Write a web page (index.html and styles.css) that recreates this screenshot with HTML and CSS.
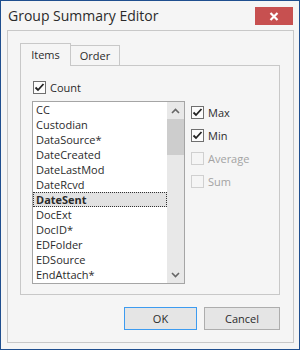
FILE: index.html
```html
<!DOCTYPE html>
<html lang="en">
  <head>
    <meta charset="UTF-8">
    <meta name="viewport" content="width=device-width, initial-scale=1.0">
    <title>Group Summary Editor</title>
    <link rel="stylesheet" href="styles.css">
  </head>
  <body>
    <div class="window">
      <div class="titlebar">
        <span class="title">Group Summary Editor</span>
        <button class="close" aria-label="Close">
          <svg width="10" height="9" viewBox="0 0 10 9">
            <path d="M1.5 1 L8.5 8 M8.5 1 L1.5 8" stroke="#fff" stroke-width="2.2" fill="none"/>
          </svg>
        </button>
      </div>

      <div class="group">
        <div class="tabs">
          <div class="tab active">Items</div>
          <div class="tab">Order</div>
        </div>

        <div class="page">
          <label class="check">
            <span class="box"><svg width="11" height="11" viewBox="0 0 11 11"><path d="M1.5 5.5 L4 8 L9.5 2" stroke="#222" stroke-width="1.8" fill="none"/></svg></span>
            Count
          </label>

          <div class="body">
            <div class="list">
              <div class="items">
                <div class="row">CC</div>
                <div class="row">Custodian</div>
                <div class="row">DataSource*</div>
                <div class="row">DateCreated</div>
                <div class="row">DateLastMod</div>
                <div class="row">DateRcvd</div>
                <div class="row selected">DateSent</div>
                <div class="row">DocExt</div>
                <div class="row">DocID*</div>
                <div class="row">EDFolder</div>
                <div class="row">EDSource</div>
                <div class="row">EndAttach*</div>
              </div>
              <div class="scrollbar">
                <span class="arrow"><svg width="9" height="6" viewBox="0 0 9 6"><path d="M1 5 L4.5 1.5 L8 5" stroke="#666" stroke-width="1.6" fill="none"/></svg></span>
                <span class="track"><span class="thumb"></span></span>
                <span class="arrow"><svg width="9" height="6" viewBox="0 0 9 6"><path d="M1 1 L4.5 4.5 L8 1" stroke="#666" stroke-width="1.6" fill="none"/></svg></span>
              </div>
            </div>

            <div class="options">
              <label class="check">
                <span class="box"><svg width="11" height="11" viewBox="0 0 11 11"><path d="M1.5 5.5 L4 8 L9.5 2" stroke="#222" stroke-width="1.8" fill="none"/></svg></span>
                Max
              </label>
              <label class="check">
                <span class="box"><svg width="11" height="11" viewBox="0 0 11 11"><path d="M1.5 5.5 L4 8 L9.5 2" stroke="#222" stroke-width="1.8" fill="none"/></svg></span>
                Min
              </label>
              <label class="check disabled">
                <span class="box"></span>
                Average
              </label>
              <label class="check disabled">
                <span class="box"></span>
                Sum
              </label>
            </div>
          </div>
        </div>

        <div class="actions">
          <button class="btn default">OK</button>
          <button class="btn cancel">Cancel</button>
        </div>
      </div>
    </div>
  </body>
</html>
```

FILE: styles.css
```css
body {
  margin: 0;
  font-family: "Open Sans", "Noto Sans", sans-serif;
  font-size: 11px;
  color: #2b2b2b;
}

.window {
  width: 300px;
  height: 350px;
  box-sizing: border-box;
  border: 1px solid #1f4f8f;
  background-color: #f5f5f5;
}

.titlebar {
  display: flex;
  align-items: flex-start;
  height: 29px;
}

.title {
  margin: 5px 0 0 7px;
  font-size: 14px;
  line-height: 20px;
  color: #2b2b2b;
}

.close {
  margin: 6px 6px 0 auto;
  width: 38px;
  height: 18px;
  padding: 0;
  border: none;
  background-color: #c75050;
  display: flex;
  align-items: center;
  justify-content: center;
}

.group {
  width: 287px;
  height: 313px;
  box-sizing: border-box;
  margin-left: 6px;
  padding: 12px 0 0 12px;
  border: 1px solid #c8c8c8;
}

.tabs {
  display: flex;
  align-items: flex-end;
  height: 22px;
}

.tab {
  box-sizing: border-box;
  width: 50px;
  height: 20px;
  margin-left: -1px;
  border: 1px solid #c8c8c8;
  border-bottom: none;
  text-align: center;
  line-height: 19px;
}

.tab.active {
  position: relative;
  z-index: 1;
  width: 51px;
  height: 23px;
  margin: 0 0 -1px 0;
  background-color: #f5f5f5;
  line-height: 21px;
}

.page {
  width: 260px;
  height: 230px;
  box-sizing: border-box;
  padding: 15px 0 0 11px;
  border: 1px solid #c8c8c8;
}

.check {
  display: flex;
  align-items: center;
  gap: 4px;
  height: 13px;
  line-height: 13px;
}

.page > .check {
  margin-left: 1px;
}

.box {
  box-sizing: border-box;
  width: 13px;
  height: 13px;
  border: 1px solid #6f6f6f;
  background-color: #fcfcfc;
  display: flex;
  align-items: center;
  justify-content: center;
}

.check.disabled {
  color: #a3a3a3;
}

.check.disabled .box {
  border-color: #d0d0d0;
  background-color: transparent;
}

.body {
  display: flex;
  margin-top: 7px;
}

.list {
  display: flex;
  width: 153px;
  height: 183px;
  box-sizing: border-box;
  border: 1px solid #a5a5a5;
  background-color: #fff;
}

.items {
  flex: 1;
}

.row {
  height: 15px;
  line-height: 15px;
  padding-left: 3px;
  white-space: nowrap;
}

.row.selected {
  box-sizing: border-box;
  padding-left: 2px;
  border: 1px dotted #333;
  background-color: #e2e2e2;
  font-weight: bold;
  line-height: 13px;
}

.scrollbar {
  width: 17px;
  display: flex;
  flex-direction: column;
  background-color: #e8e8e8;
}

.arrow {
  height: 17px;
  display: flex;
  align-items: center;
  justify-content: center;
}

.track {
  flex: 1;
}

.thumb {
  display: block;
  height: 36px;
  background-color: #cdcdcd;
}

.options {
  display: flex;
  flex-direction: column;
  gap: 10px;
  margin: 5px 0 0 6px;
}

.actions {
  display: flex;
  justify-content: flex-end;
  gap: 7px;
  width: 260px;
  margin-top: 12px;
}

.btn {
  height: 23px;
  padding: 0;
  border: 1px solid #adadad;
  background-color: #e5e5e5;
  font-family: "Open Sans", "Noto Sans", sans-serif;
  font-size: 11px;
  color: #2b2b2b;
}

.btn.default {
  width: 73px;
  border-color: #3d9bf0;
}

.btn.cancel {
  width: 76px;
}
```
